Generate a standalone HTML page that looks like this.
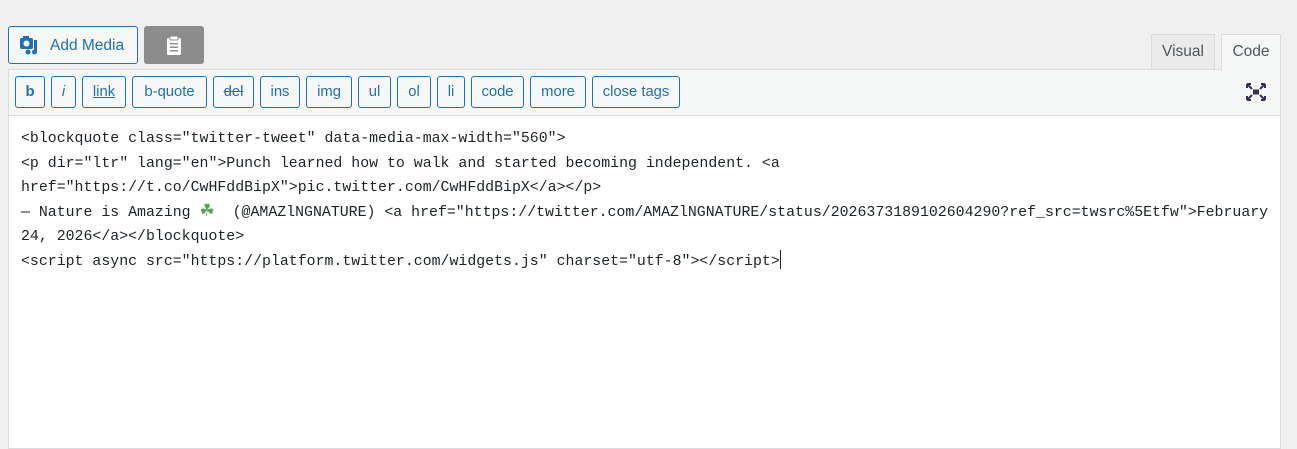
<!DOCTYPE html>
<html><head><meta charset="utf-8"><style>
body{margin:0;width:1297px;height:441px;background:#f0f0f1;font-family:"Liberation Sans",sans-serif;position:relative;overflow:hidden}
.abs{position:absolute;box-sizing:border-box}
.addm{left:8px;top:26px;width:130px;height:38px;border:1px solid #2271b1;border-radius:3px;background:#f6f7f7;color:#2271b1;font-size:15.5px}
.clip{left:144px;top:26px;width:60px;height:38px;background:#8c8c8c;border-radius:3px}
.tab{top:34px;height:36px;border:1px solid #dcdcde;border-bottom:none;font-size:15.5px;color:#50575e;text-align:center;line-height:34px;background:#ebebeb}
.wrap{left:8px;top:69px;width:1273px;height:380px;border:1px solid #dcdcde;background:#fff}
.tb{left:9px;top:70px;width:1271px;height:46px;background:#f6f7f7;border-bottom:1px solid #dcdcde}
.btn{top:76px;height:32px;border:1px solid #2271b1;border-radius:3px;background:#f6f7f7;color:#2271b1;font-size:14.8px;text-align:center;line-height:30px}
.code{left:21px;top:127px;font-family:"Liberation Mono",monospace;font-size:14.88px;line-height:24.6px;color:#1d2327;white-space:pre}
</style></head><body>
<div class="abs addm"><svg style="position:absolute;left:10px;top:8px" width="22" height="20" viewBox="0 0 22 20"><rect x="1" y="3" width="13" height="11" rx="2" fill="#2271b1"/><rect x="4" y="1" width="6" height="3" fill="#2271b1"/><circle cx="7.5" cy="8.5" r="3" fill="#f6f7f7"/><rect x="15" y="5" width="3" height="12" fill="#2271b1"/><circle cx="15.5" cy="17" r="2.5" fill="#2271b1"/><circle cx="9" cy="17" r="2.5" fill="#2271b1"/></svg><span style="position:absolute;left:41px;top:10px">Add Media</span></div>
<div class="abs clip"><svg style="position:absolute;left:21px;top:9px" width="18" height="21" viewBox="0 0 18 21"><rect x="2" y="3" width="14" height="17" rx="1.5" fill="#fff"/><rect x="5" y="1" width="8" height="4" rx="1" fill="#fff" stroke="#8c8c8c"/><rect x="5" y="8" width="8" height="1.5" fill="#8c8c8c"/><rect x="5" y="11.5" width="8" height="1.5" fill="#8c8c8c"/><rect x="5" y="15" width="8" height="1.5" fill="#8c8c8c"/></svg></div>
<div class="abs tab" style="left:1151px;width:64px">Visual</div>
<div class="abs wrap"></div>
<div class="abs tab" style="left:1221px;width:60px;height:37px;background:#f6f7f7;z-index:2">Code</div>
<div class="abs tb"></div>
<div class="abs btn" style="left:15px;width:30px;font-weight:bold">b</div>
<div class="abs btn" style="left:51px;width:25px;font-style:italic">i</div>
<div class="abs btn" style="left:82px;width:44px;text-decoration:underline">link</div>
<div class="abs btn" style="left:132px;width:75px">b-quote</div>
<div class="abs btn" style="left:213px;width:41px;text-decoration:line-through">del</div>
<div class="abs btn" style="left:260px;width:40px">ins</div>
<div class="abs btn" style="left:306px;width:46px">img</div>
<div class="abs btn" style="left:358px;width:33px">ul</div>
<div class="abs btn" style="left:397px;width:34px">ol</div>
<div class="abs btn" style="left:437px;width:28px">li</div>
<div class="abs btn" style="left:471px;width:53px">code</div>
<div class="abs btn" style="left:530px;width:56px">more</div>
<div class="abs btn" style="left:592px;width:88px">close tags</div>
<svg class="abs" style="left:1245px;top:82px" width="22" height="20" viewBox="0 0 22 20" fill="none" stroke="#3c2f55" stroke-width="2"><path d="M2 2l5 5M2 2h4M2 2v4M20 2l-5 5M20 2h-4M20 2v4M2 18l5-5M2 18h4M2 18v-4M20 18l-5-5M20 18h-4M20 18v-4"/><rect x="8" y="7.5" width="6" height="5" fill="#3c2f55" stroke="none"/></svg>
<div class="abs code">&lt;blockquote class="twitter-tweet" data-media-max-width="560"&gt;
&lt;p dir="ltr" lang="en"&gt;Punch learned how to walk and started becoming independent. &lt;a
href="https://t.co/CwHFddBipX"&gt;pic.twitter.com/CwHFddBipX&lt;/a&gt;&lt;/p&gt;
— Nature is Amazing <span style="color:#5aa05a;font-size:17px">☘</span>  (@AMAZlNGNATURE) &lt;a href="https://twitter.com/AMAZlNGNATURE/status/2026373189102604290?ref_src=twsrc%5Etfw"&gt;February
24, 2026&lt;/a&gt;&lt;/blockquote&gt;
&lt;script async src="https://platform.twitter.com/widgets.js" charset="utf-8"&gt;&lt;/script&gt;<span style="display:inline-block;width:1px;height:19px;background:#1d2327;vertical-align:-4px"></span></div>
</body></html>
